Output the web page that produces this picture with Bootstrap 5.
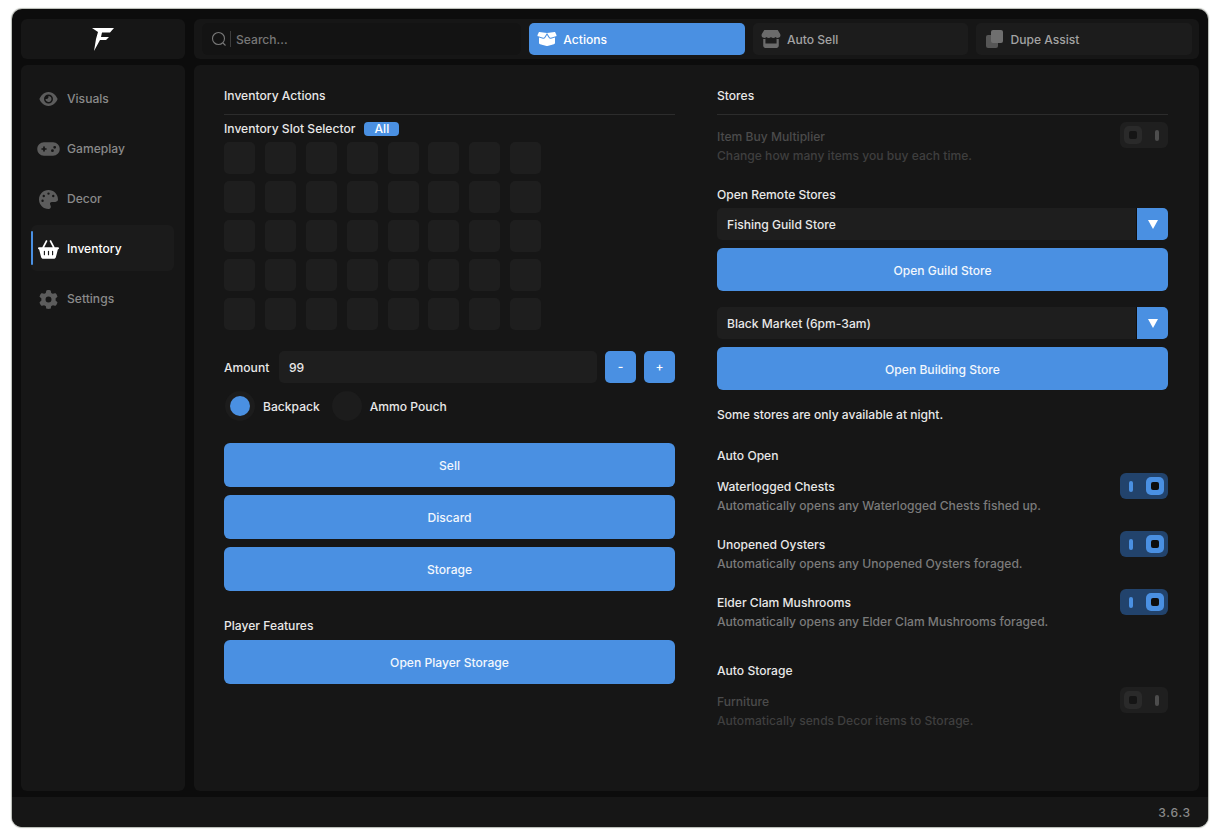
<!DOCTYPE html>
<html lang="en">
<head>
  <meta charset="UTF-8" />
  <title>Inventory</title>
  <link href="https://cdn.jsdelivr.net/npm/bootstrap@5.3.3/dist/css/bootstrap.min.css" rel="stylesheet" />
  <style>
    html, body { height: 100%; }
    body { background: #fff; font-family: Inter, "Liberation Sans", sans-serif; font-size: 12.1px; font-weight: 500; color: #e8e8e8; line-height: 16px; overflow: hidden; }
    .app-window { width: 1196px; height: 818px; margin: 9px 0 0 12px; background: #0c0c0c; border-radius: 10px; box-shadow: 0 0 1px 1px rgba(120,125,115,.55); overflow: hidden; display: flex; flex-direction: column; }
    .app-body { flex: 1; display: grid; grid-template-columns: 164px 1005px; grid-template-rows: 40px 726px; gap: 6px 9px; padding: 10px 9px 6px 9px; }
    .panel { background: #161616; border-radius: 6px; }
    .logo-box { display: flex; align-items: center; justify-content: center; }
    .topbar { display: flex; align-items: center; gap: 8px; padding: 0 7px 0 8px; }
    .search-box { width: 320px; height: 32px; background: #131313; border-radius: 6px; display: flex; align-items: center; color: #777; padding-left: 9px; }
    .search-sep { width: 1px; height: 16px; background: #3d3d3d; margin: 0 5px 0 3px; }
    .tab-item { width: 216px; height: 32px; background: #1c1c1c; border-radius: 5px; display: flex; align-items: center; gap: 6px; padding-left: 8px; color: #a3a3a3; }
    .tab-item.is-on { background: #4a90e2; color: #fff; }
    .tab-item svg { fill: #6b6b6b; }
    .tab-item.is-on svg { fill: #fff; }
    .side-list { padding-top: 10px; padding-left: 10px; }
    .side-item { width: 143px; height: 46px; margin-bottom: 4px; padding-top: 2px; display: flex; align-items: center; border-radius: 6px; color: #8a8a8a; position: relative; }
    .side-item svg { fill: #5c5c5c; }
    .side-icon { width: 34px; margin-right: 2px; display: flex; justify-content: center; }
    .side-item.is-on { background: #1b1b1b; color: #fff; }
    .side-item.is-on svg { fill: #fff; }
    .side-item.is-on::before { content: ""; position: absolute; left: 0; top: 6px; bottom: 6px; width: 2px; background: #4a90e2; border-radius: 1px; }
    .main-panel { display: grid; grid-template-columns: 451px 451px; column-gap: 42px; padding: 22px 0 0 30px; align-content: start; }
    /* text sits 1px lower in its line box than Inter gives at this size */
    .sect-head, .slot-label, .amount-label, .radio-text, .player-head, .remote-head, .night-note,
    .auto-open-head, .auto-store-head, .opt-text > div, .search-box > span:last-child, .tab-item > span, .select-box > span:first-child { transform: translateY(1px); }
    .sect-head { height: 16px; margin-bottom: 11px; }
    .sect-line { height: 1px; background: #2c2c2c; margin-bottom: 5px; }
    .slot-label { display: flex; align-items: center; gap: 9px; height: 16px; }
    .all-pill { width: 35px; height: 14px; background: #4a90e2; color: #fff; border-radius: 4px; line-height: 14px; text-align: center; }
    .slot-grid { display: grid; grid-template-columns: repeat(8, 31px); grid-auto-rows: 32px; column-gap: 9.9px; row-gap: 7px; margin-top: 6px; }
    .slot-cell { background: #1e1e1e; border-radius: 5px; }
    .amount-row { display: flex; align-items: center; margin-top: 21px; height: 32px; }
    .amount-label { width: 55px; }
    .amount-input { width: 318px; height: 32px; background: #1e1e1e; border-radius: 5px; padding-left: 10px; line-height: 34px; margin-right: 8px; }
    .step-btn { width: 31px; height: 32px; background: #4a90e2; color: #fff; border-radius: 5px; text-align: center; line-height: 32px; padding: 0; border: 0; font-size: 12.1px; font-weight: 500; }
    .step-btn + .step-btn { margin-left: 8px; }
    .radio-row { display: flex; align-items: center; height: 30px; margin-top: 8px; padding-left: 1px; }
    .radio-dot { width: 30px; height: 30px; border-radius: 50%; background: #1c1c1c; display: flex; align-items: center; justify-content: center; flex: none; }
    .radio-dot i { display: block; width: 20px; height: 20px; background: #4a90e2; border-radius: 50%; }
    .radio-text { margin: 0 12px 0 8px; }
    .blue-btn { display: block; width: 100%; height: 44px; background: #4a90e2; color: #f2f7fd; border: 0; border-radius: 6px; font-size: 12.1px; font-weight: 500; padding: 2px 0 0; text-align: center; }
    .blue-btn.is-short { height: 43px; }
    .gap-8 { margin-top: 8px; }
    .gap-sell { margin-top: 22px; }
    .player-head { margin: 26px 0 7px; }
    .opt-row { display: flex; justify-content: space-between; }
    .opt-text { padding-top: 5px; }
    .opt-text.is-first { padding-top: 6px; }
    .opt-next { margin-top: 18px; }
    .opt-top { margin-top: 7px; }
    .opt-sub { color: #7b7b7b; margin-top: 3px; }
    .is-off { color: #4b4b4b; }
    .is-off .opt-sub { color: #3f3f3f; }
    .toggle-box { width: 48px; height: 26px; border-radius: 6px; background: #1f1f1f; display: flex; align-items: center; justify-content: space-between; padding: 0 9px 0 4px; flex: none; }
    .toggle-knob { width: 18px; height: 18px; border-radius: 5px; background: #2a2a2a; display: flex; align-items: center; justify-content: center; }
    .toggle-knob i { display: block; width: 8px; height: 8px; background: #151515; border-radius: 2px; }
    .toggle-bar { width: 4px; height: 11px; border-radius: 2px; background: #4d4d4d; }
    .toggle-box.is-set { background: #22436c; padding: 0 4px 0 9px; }
    .toggle-box.is-set .toggle-knob { background: #4a90e2; }
    .toggle-box.is-set .toggle-knob i { background: #0d0d0d; }
    .toggle-box.is-set .toggle-bar { background: #4a90e2; }
    .select-box { height: 32px; background: #1e1e1e; border-radius: 5px; display: flex; align-items: center; justify-content: space-between; padding-left: 10px; overflow: hidden; }
    .select-box.is-second { margin-top: 16px; }
    .select-arrow { width: 31px; height: 32px; background: #4a90e2; display: flex; align-items: center; justify-content: center; box-shadow: -1px 0 0 #0f0f0f; }
    .select-arrow b { display: block; width: 0; height: 0; border-left: 5px solid transparent; border-right: 5px solid transparent; border-top: 9px solid #fff; }
    .remote-head { margin: 23px 0 6px; }
    .night-note { margin-top: 16px; }
    .auto-open-head { margin: 25px 0 10px; }
    .auto-store-head { margin: 33px 0 9px; }
    .app-foot { height: 30px; background: #161616; color: #8a8a8a; display: flex; align-items: center; justify-content: flex-end; padding: 2px 17px 0 0; letter-spacing: .8px; }
  </style>
</head>
<body>
  <div class="app-window">
    <div class="app-body">
      <div class="panel logo-box">
        <svg width="23" height="23" viewBox="0 0 23 23"><polygon fill="#fff" points="0,0 22,0 18,4.5 10,4.5 9,9 17,9 14,12 8,12 2,23 4,11 6,4"/></svg>
      </div>
      <div class="panel topbar">
        <div class="search-box">
          <svg width="16" height="16" viewBox="0 0 16 16" fill="none" stroke="#777" stroke-width="1.1"><circle cx="7.5" cy="7.5" r="6"/><path d="M12 12l2.5 2.5"/></svg>
          <span class="search-sep"></span>
          <span>Search...</span>
        </div>
        <div class="tab-item is-on">
          <svg width="20" height="16" viewBox="0 0 640 512"><path d="M58.9 42.1c3-6.1 9.6-9.6 16.3-8.7L320 64 564.8 33.4c6.7-.8 13.3 2.7 16.3 8.7l41.7 83.4c9 17.9-.6 39.6-19.8 45.1L439.6 217.3c-13.9 4-28.8-1.9-36.2-14.3L320 64 236.6 203c-7.4 12.4-22.3 18.3-36.2 14.3L37.1 170.6c-19.3-5.5-28.8-27.2-19.8-45.1L58.9 42.1zM321.1 128l54.9 91.4c14.9 24.8 44.6 36.6 72.5 28.6L576 211.6v167c0 22-15 41.2-36.4 46.6l-204.1 51c-10.2 2.6-20.9 2.6-31 0l-204.1-51C79 419.7 64 400.5 64 378.5v-167L191.6 248c27.8 8 57.6-3.8 72.5-28.6L318.9 128h2.2z"/></svg>
          <span>Actions</span>
        </div>
        <div class="tab-item">
          <svg width="20" height="18" viewBox="0 0 576 512"><path d="M547.6 103.8L490.3 13.1C485.2 5 476.1 0 466.4 0H109.6C99.9 0 90.8 5 85.7 13.1L28.3 103.8c-29.6 46.8-3.4 111.9 51.9 119.4c4 .5 8.1 .8 12.1 .8c26.1 0 49.3-11.4 65.2-29c15.9 17.6 39.1 29 65.2 29c26.1 0 49.3-11.4 65.2-29c15.9 17.6 39.1 29 65.2 29c26.2 0 49.3-11.4 65.2-29c16 17.6 39.1 29 65.2 29c4.1 0 8.1-.3 12.1-.8c55.5-7.4 81.8-72.5 52.1-119.4zM499.7 254.9l-.1 0c-5.3 .7-10.7 1.1-16.2 1.1c-12.4 0-24.3-1.9-35.4-5.3V384H128V250.6c-11.2 3.5-23.2 5.4-35.6 5.4c-5.5 0-11-.4-16.3-1.1l-.1 0c-4.1-.6-8.1-1.3-12-2.3V384v64c0 35.3 28.7 64 64 64H448c35.3 0 64-28.7 64-64V384 252.6c-4 1-8 1.8-12.3 2.3z"/></svg>
          <span>Auto Sell</span>
        </div>
        <div class="tab-item">
          <svg width="20" height="18" viewBox="0 0 20 18"><rect x="2" y="5" width="12" height="13" rx="2" fill="#565656"/><rect x="7" y="0" width="12" height="13" rx="2" fill="#6f6f6f"/></svg>
          <span>Dupe Assist</span>
        </div>
      </div>
      <div class="panel side-list">
        <div class="side-item"><span class="side-icon"><svg width="21" height="16" viewBox="0 0 576 512"><path d="M288 32c-80.8 0-145.5 36.8-192.6 80.6C48.6 156 17.3 208 2.5 243.7c-3.3 7.9-3.3 16.7 0 24.6C17.3 304 48.6 356 95.4 399.4C142.5 443.2 207.2 480 288 480s145.5-36.8 192.6-80.6c46.8-43.5 78.1-95.4 93-131.1c3.3-7.9 3.3-16.7 0-24.6c-14.9-35.7-46.2-87.7-93-131.1C433.5 68.8 368.8 32 288 32zM144 256a144 144 0 1 1 288 0 144 144 0 1 1 -288 0zm144-64c0 35.3-28.7 64-64 64c-7.1 0-13.9-1.2-20.3-3.3c-5.5-1.8-11.9 1.6-11.7 7.4c.3 6.9 1.3 13.8 3.2 20.7c13.7 51.2 66.4 81.6 117.6 67.9s81.6-66.4 67.9-117.6c-11.1-41.5-47.8-69.4-88.6-71.1c-5.8-.2-9.2 6.1-7.4 11.7c2.1 6.4 3.3 13.2 3.3 20.3z"/></svg></span>Visuals</div>
        <div class="side-item"><span class="side-icon"><svg width="23" height="18" viewBox="0 0 640 512"><path d="M192 64C86 64 0 150 0 256S86 448 192 448H448c106 0 192-86 192-192s-86-192-192-192H192zM496 168a40 40 0 1 1 0 80 40 40 0 1 1 0-80zM392 304a40 40 0 1 1 80 0 40 40 0 1 1 -80 0zM168 200c0-13.3 10.7-24 24-24s24 10.7 24 24v32h32c13.3 0 24 10.7 24 24s-10.7 24-24 24H216v32c0 13.3-10.7 24-24 24s-24-10.7-24-24V280H136c-13.3 0-24-10.7-24-24s10.7-24 24-24h32V200z"/></svg></span>Gameplay</div>
        <div class="side-item"><span class="side-icon"><svg width="19" height="19" viewBox="0 0 512 512"><path d="M512 256c0 .9 0 1.8 0 2.7c-.4 36.5-33.6 61.3-70.1 61.3H344c-26.5 0-48 21.5-48 48c0 3.4 .4 6.7 1 9.9c2.1 10.2 6.5 20 10.8 29.9c6.1 13.8 12.1 27.5 12.1 42c0 31.8-21.6 60.7-53.4 62c-3.5 .1-7 .2-10.6 .2C114.6 512 0 397.4 0 256S114.6 0 256 0S512 114.6 512 256zM128 288a32 32 0 1 0 -64 0 32 32 0 1 0 64 0zm0-96a32 32 0 1 0 0-64 32 32 0 1 0 0 64zM288 96a32 32 0 1 0 -64 0 32 32 0 1 0 64 0zm96 96a32 32 0 1 0 0-64 32 32 0 1 0 0 64z"/></svg></span>Decor</div>
        <div class="side-item is-on"><span class="side-icon"><svg width="21" height="19" viewBox="0 0 576 512"><path d="M253.3 35.1c6.1-11.8 1.5-26.3-10.2-32.4s-26.3-1.5-32.4 10.2L117.6 192H32c-17.7 0-32 14.3-32 32s14.3 32 32 32L83.9 463.5C91 492 116.6 512 146 512H430c29.4 0 55-20 62.1-48.5L544 256c17.7 0 32-14.3 32-32s-14.3-32-32-32H458.4L365.3 12.9C359.2 1.2 344.7-3.4 332.9 2.7s-16.3 20.6-10.2 32.4L404.3 192H171.7L253.3 35.1zM192 304v96c0 8.8-7.2 16-16 16s-16-7.2-16-16V304c0-8.8 7.2-16 16-16s16 7.2 16 16zm96-16c8.8 0 16 7.2 16 16v96c0 8.8-7.2 16-16 16s-16-7.2-16-16V304c0-8.8 7.2-16 16-16zm128 16v96c0 8.8-7.2 16-16 16s-16-7.2-16-16V304c0-8.8 7.2-16 16-16s16 7.2 16 16z"/></svg></span>Inventory</div>
        <div class="side-item"><span class="side-icon"><svg width="19" height="19" viewBox="0 0 512 512"><path d="M495.9 166.6c3.2 8.7 .5 18.4-6.4 24.6l-43.3 39.4c1.1 8.3 1.7 16.8 1.7 25.4s-.6 17.1-1.7 25.4l43.3 39.4c6.9 6.2 9.6 15.9 6.4 24.6c-4.4 11.9-9.7 23.3-15.8 34.3l-4.7 8.1c-6.6 11-14 21.4-22.1 31.2c-5.9 7.2-15.7 9.6-24.5 6.8l-55.7-17.7c-13.4 10.3-28.2 18.9-44 25.4l-12.5 57.1c-2 9.1-9 16.3-18.2 17.8c-13.8 2.3-28 3.5-42.5 3.5s-28.7-1.2-42.5-3.5c-9.2-1.5-16.2-8.7-18.2-17.8l-12.5-57.1c-15.8-6.5-30.6-15.1-44-25.4L83.1 425.9c-8.8 2.8-18.6 .3-24.5-6.8c-8.1-9.8-15.5-20.2-22.1-31.2l-4.7-8.1c-6.1-11-11.4-22.4-15.8-34.3c-3.2-8.7-.5-18.4 6.4-24.6l43.3-39.4C64.6 273.1 64 264.6 64 256s.6-17.1 1.7-25.4L22.4 191.2c-6.9-6.2-9.6-15.9-6.4-24.6c4.4-11.9 9.7-23.3 15.8-34.3l4.7-8.1c6.6-11 14-21.4 22.1-31.2c5.9-7.2 15.7-9.6 24.5-6.8l55.7 17.7c13.4-10.3 28.2-18.9 44-25.4l12.5-57.1c2-9.1 9-16.3 18.2-17.8C227.3 1.2 241.5 0 256 0s28.7 1.2 42.5 3.5c9.2 1.5 16.2 8.7 18.2 17.8l12.5 57.1c15.8 6.5 30.6 15.1 44 25.4l55.7-17.7c8.8-2.8 18.6-.3 24.5 6.8c8.1 9.8 15.5 20.2 22.1 31.2l4.7 8.1c6.1 11 11.4 22.4 15.8 34.3zM256 336a80 80 0 1 0 0-160 80 80 0 1 0 0 160z"/></svg></span>Settings</div>
      </div>
      <div class="panel main-panel">
        <div>
          <div class="sect-head">Inventory Actions</div>
          <div class="sect-line"></div>
          <div class="slot-label">Inventory Slot Selector <span class="all-pill">All</span></div>
          <div class="slot-grid" id="slotGrid"></div>
          <div class="amount-row">
            <span class="amount-label">Amount</span>
            <div class="amount-input">99</div>
            <button class="step-btn">-</button>
            <button class="step-btn">+</button>
          </div>
          <div class="radio-row">
            <span class="radio-dot"><i></i></span><span class="radio-text">Backpack</span>
            <span class="radio-dot"></span><span class="radio-text">Ammo Pouch</span>
          </div>
          <button class="blue-btn gap-sell">Sell</button>
          <button class="blue-btn gap-8">Discard</button>
          <button class="blue-btn gap-8">Storage</button>
          <div class="player-head">Player Features</div>
          <button class="blue-btn">Open Player Storage</button>
        </div>
        <div>
          <div class="sect-head">Stores</div>
          <div class="sect-line"></div>
          <div class="opt-row opt-top is-off">
            <div class="opt-text is-first"><div>Item Buy Multiplier</div><div class="opt-sub">Change how many items you buy each time.</div></div>
            <div class="toggle-box"><span class="toggle-knob"><i></i></span><span class="toggle-bar"></span></div>
          </div>
          <div class="remote-head">Open Remote Stores</div>
          <div class="select-box"><span>Fishing Guild Store</span><span class="select-arrow"><b></b></span></div>
          <button class="blue-btn is-short gap-8">Open Guild Store</button>
          <div class="select-box is-second"><span>Black Market (6pm-3am)</span><span class="select-arrow"><b></b></span></div>
          <button class="blue-btn is-short gap-8">Open Building Store</button>
          <div class="night-note">Some stores are only available at night.</div>
          <div class="auto-open-head">Auto Open</div>
          <div class="opt-row">
            <div class="opt-text"><div>Waterlogged Chests</div><div class="opt-sub">Automatically opens any Waterlogged Chests fished up.</div></div>
            <div class="toggle-box is-set"><span class="toggle-bar"></span><span class="toggle-knob"><i></i></span></div>
          </div>
          <div class="opt-row opt-next">
            <div class="opt-text"><div>Unopened Oysters</div><div class="opt-sub">Automatically opens any Unopened Oysters foraged.</div></div>
            <div class="toggle-box is-set"><span class="toggle-bar"></span><span class="toggle-knob"><i></i></span></div>
          </div>
          <div class="opt-row opt-next">
            <div class="opt-text"><div>Elder Clam Mushrooms</div><div class="opt-sub">Automatically opens any Elder Clam Mushrooms foraged.</div></div>
            <div class="toggle-box is-set"><span class="toggle-bar"></span><span class="toggle-knob"><i></i></span></div>
          </div>
          <div class="auto-store-head">Auto Storage</div>
          <div class="opt-row is-off">
            <div class="opt-text is-first"><div>Furniture</div><div class="opt-sub">Automatically sends Decor items to Storage.</div></div>
            <div class="toggle-box"><span class="toggle-knob"><i></i></span><span class="toggle-bar"></span></div>
          </div>
        </div>
      </div>
    </div>
    <div class="app-foot">3.6.3</div>
  </div>
  <script>
    const slotGrid = document.getElementById("slotGrid");
    for (let i = 0; i < 40; i++) {
      const cell = document.createElement("div");
      cell.className = "slot-cell";
      slotGrid.appendChild(cell);
    }
  </script>
  <script src="https://cdn.jsdelivr.net/npm/bootstrap@5.3.3/dist/js/bootstrap.bundle.min.js"></script>
</body>
</html>
